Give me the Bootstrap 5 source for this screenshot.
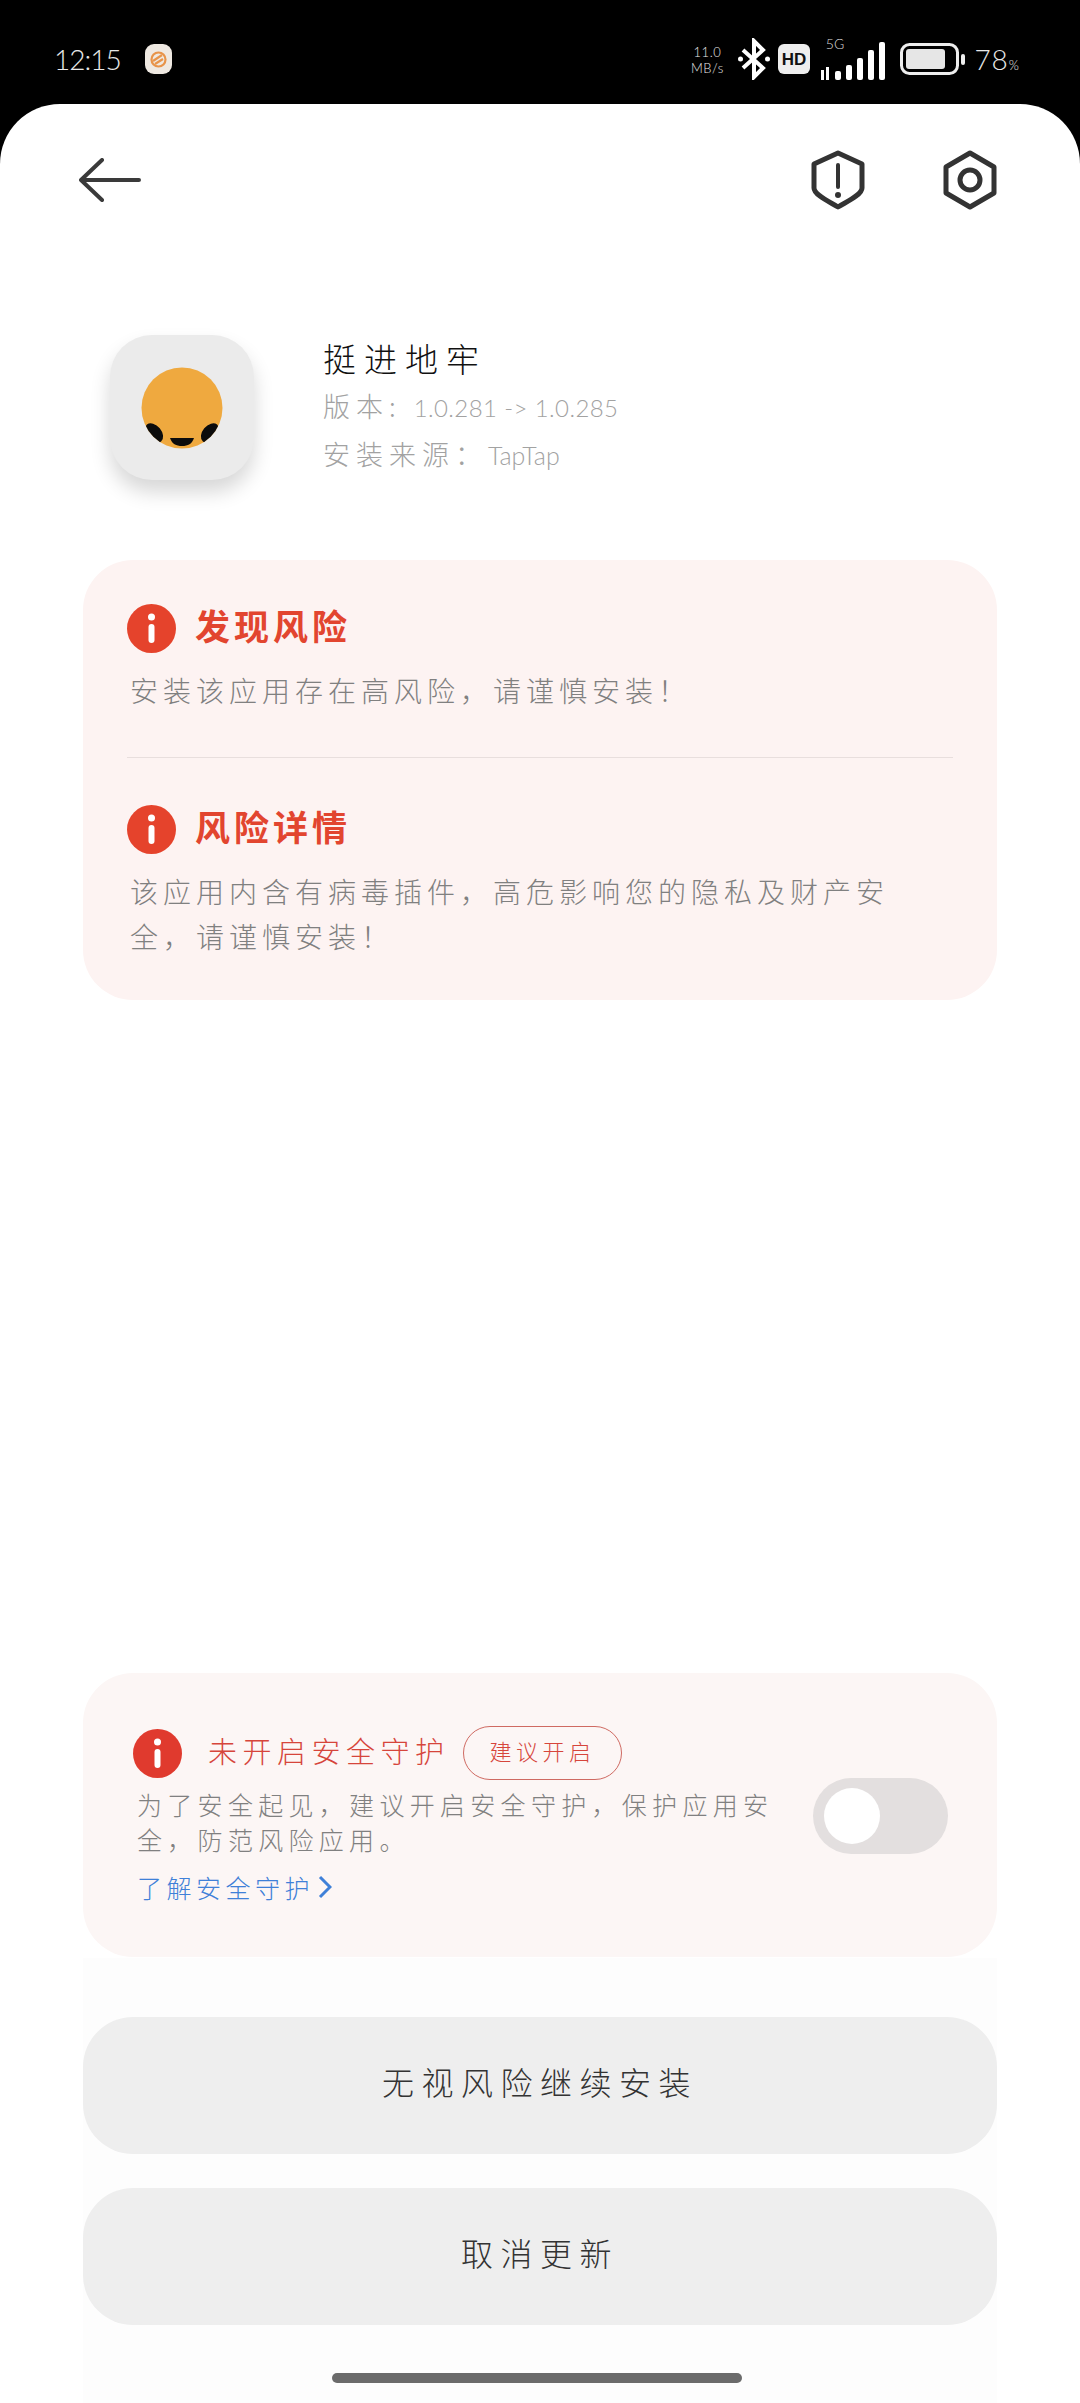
<!DOCTYPE html>
<html lang="zh-CN"><head><meta charset="utf-8">
<link href="https://cdn.jsdelivr.net/npm/bootstrap@5.3.0/dist/css/bootstrap.min.css" rel="stylesheet">
<style>
html,body{margin:0;width:1080px;height:2403px;overflow:hidden;background:#000;font-family:"Noto Sans CJK SC","Noto Sans",sans-serif;font-weight:300}
.stat{height:104px;padding-top:14px;color:#e8e8e8;font-family:"Lato","Noto Sans",sans-serif;font-weight:300}
.clock{font-size:28px;letter-spacing:-1px;margin-left:54px;width:91px;line-height:1}
.appdot{width:27px;height:30px;border-radius:9px;background:#efe9e2}
.speed{font-size:13px;line-height:16px;width:36px;text-align:center;letter-spacing:.5px;margin-right:13px;padding-top:2px}
.sigbars{margin-right:12px}
.pct{font-size:28px;margin-left:8px;margin-right:60px;line-height:1;letter-spacing:1px}
.pct small{font-size:13px}
.sheet{height:2299px;background:#fff;border-radius:60px 60px 0 0}
.topbar{height:60px;margin-top:46px;padding:0 83px 0 79px}
.approw{margin-top:125px;padding-left:110px;gap:69px}
.appicon{width:144px;height:145px;border-radius:42px;background:#ebebeb;box-shadow:0 12px 20px rgba(0,0,0,.16)}
.appname{font-size:33px;line-height:46px;color:#111;letter-spacing:8px;margin-bottom:2px}
.appsub{font-size:27px;line-height:46px;color:#a2a2a2;letter-spacing:6px}
.latin{font-size:24px;letter-spacing:.4px;font-family:"Lato","Noto Sans",sans-serif}
.latin2{font-size:25px;letter-spacing:0;font-family:"Lato","Noto Sans",sans-serif}
.panel{margin:80px 83px 0;padding:44px 44px 41px;background:#fdf3f2;border-radius:50px}
.ico{width:49px;height:49px;flex:none}
.head{font-size:35px;line-height:49px;font-weight:700;color:#e2452f;letter-spacing:4px;margin-left:19px;margin-top:-9px}
.txt{font-size:28px;line-height:45px;letter-spacing:5px;color:#808080;padding-left:3px;max-width:790px}
.rule{height:1px;background:#e8dedd;margin:44px 0 47px}
.txtgap{margin-top:15px}
.foot{margin:auto 83px 0;background:linear-gradient(#fff 0 285px,#fdfdfd 285px)}
.guard{height:284px;background:#fcf6f5;border-radius:50px;padding:53px 49px 52px 50px}
.guardtitle{font-size:29px;line-height:54px;letter-spacing:5.5px;color:#d6453b;margin-left:26px;width:255px;white-space:nowrap;margin-top:-6px}
.tag{width:159px;height:54px;border:1px solid #cf6a62;border-radius:27px;color:#d6453b;font-size:22px;letter-spacing:4.500px;line-height:46px;text-align:center}
.guardtxt{font-size:25px;line-height:35px;letter-spacing:5.3px;color:#808080;padding-left:4px;margin-top:7px;width:650px}
.guardlink{font-size:25px;line-height:36px;letter-spacing:4.5px;color:#3f80d8;margin-top:12px;padding-left:4px}
.tog{width:135px;height:76px;border-radius:38px;background:#e3dfdf;padding:10px 11px;flex:none}
.knob{width:56px;height:56px;border-radius:50%;background:#fff}
.bigbtn{height:137px;padding-bottom:16px;border:0;border-radius:50px;background:#eee;color:#333;font-size:32px;letter-spacing:7.5px;font-weight:300}
.bigbtn:hover{background:#eee;color:#333}
.firstbtn{margin-top:60px}
.nextbtn{margin-top:34px}
.homebar{width:410px;height:10px;background:#6b6b6b;border-radius:5px;margin:48px 0 20px 249px}
</style></head>
<body>
<div class="stat d-flex align-items-center">
  <div class="clock">12:15</div>
  <div class="appdot d-flex align-items-center justify-content-center">
    <svg width="19" height="19" viewBox="0 0 19 19" fill="none" stroke="#e8944a" stroke-width="2.2"><circle cx="9.500" cy="9.500" r="7"/><path d="M4 11l9-6M6 14l8-5"/></svg>
  </div>
  <div class="ms-auto speed">11.0<br>MB/s</div>
  <svg width="32" height="42" viewBox="0 0 32 42" fill="none" stroke="#fff" stroke-width="4" class="me-2"><path d="M5 12l20 18-9 9V3l9 9L5 30"/><circle cx="2.500" cy="21" r="2.500" fill="#fff" stroke="none"/><circle cx="29.500" cy="21" r="2.500" fill="#fff" stroke="none"/></svg>
  <svg width="32" height="30" viewBox="0 0 32 30" class="me-2"><rect width="32" height="30" rx="6" fill="#eee"/><text x="16" y="21" text-anchor="middle" font-family="Liberation Sans" font-weight="700" font-size="17" fill="#111">HD</text></svg>
  <svg width="70" height="46" viewBox="0 0 70 46" class="sigbars"><text x="17" y="13" text-anchor="middle" font-family="Lato" font-size="14" fill="#ddd">5G</text><g fill="#fff"><rect x="3" y="34" width="3" height="10"/><rect x="8" y="31" width="3" height="13"/><rect x="17" y="35" width="6" height="9" rx="2"/><rect x="28" y="29" width="6" height="15" rx="2"/><rect x="39" y="22" width="6" height="22" rx="2"/><rect x="50" y="14" width="6" height="30" rx="2"/><rect x="61" y="6" width="6" height="38" rx="2"/></g></svg>
  <svg width="66" height="32" viewBox="0 0 66 32"><rect x="1.500" y="1.500" width="56" height="29" rx="8" fill="none" stroke="#eee" stroke-width="3"/><rect x="6" y="6" width="39" height="20" rx="3" fill="#e6e6e6"/><rect x="61" y="11" width="4" height="11" rx="2" fill="#eee"/></svg>
  <div class="pct">78<small>%</small></div>
</div>
<div class="sheet d-flex flex-column">
  <div class="topbar d-flex align-items-center">
    <svg width="62" height="44" viewBox="0 0 62 44" fill="none" stroke="#3a3a3a" stroke-width="4" stroke-linecap="round" stroke-linejoin="round"><path d="M23 2L2 22l21 20M2 22h58"/></svg>
    <svg class="ms-auto" width="54" height="60" viewBox="0 0 54 60" fill="none" stroke="#333" stroke-width="5" stroke-linejoin="round"><path d="M27 3l24 11v24c0 7-16 14-24 19C19 52 3 45 3 38V14z"/><path d="M27 15v22" stroke-width="4" stroke-linecap="round"/><circle cx="27" cy="45" r="3" fill="#333" stroke="none"/></svg>
    <svg style="margin-left:78px" width="54" height="60" viewBox="0 0 54 60" fill="none" stroke="#333" stroke-width="5" stroke-linejoin="round"><path d="M27 3l24 14v26L27 57 3 43V17z"/><circle cx="27" cy="30" r="10"/></svg>
  </div>

  <div class="approw d-flex">
    <div class="appicon d-flex align-items-center justify-content-center flex-none">
      <svg width="82" height="82" viewBox="0 0 82 82"><defs><clipPath id="egg"><circle cx="41" cy="41" r="40.500"/></clipPath></defs><circle cx="41" cy="41" r="40.500" fill="#efa93f"/><g clip-path="url(#egg)"><ellipse cx="13" cy="66" rx="11" ry="7.500" transform="rotate(50 13 66)" fill="#0c0c0c"/><ellipse cx="69" cy="66" rx="11" ry="7.500" transform="rotate(-50 69 66)" fill="#0c0c0c"/><path d="M29 71h24c-2 6-6 8-12 8s-10-2-12-8z" fill="#0c0c0c"/></g></svg>
    </div>
    <div>
      <div class="appname">挺进地牢</div>
      <div class="appsub">版本: <span class="latin">1.0.281 -&gt; 1.0.285</span></div>
      <div class="appsub">安装来源：<span class="latin2">TapTap</span></div>
    </div>
  </div>

  <div class="panel">
    <div class="d-flex align-items-center">
      <svg class="ico" viewBox="0 0 49 49"><circle cx="24.500" cy="24.500" r="24.500" fill="#e5432c"/><circle cx="24.500" cy="13" r="3.500" fill="#fff"/><rect x="21.500" y="20" width="6" height="19" rx="3" fill="#fff"/></svg>
      <div class="head">发现风险</div>
    </div>
    <div class="txt txtgap">安装该应用存在高风险，请谨慎安装！</div>
    <div class="rule"></div>
    <div class="d-flex align-items-center">
      <svg class="ico" viewBox="0 0 49 49"><circle cx="24.500" cy="24.500" r="24.500" fill="#e5432c"/><circle cx="24.500" cy="13" r="3.500" fill="#fff"/><rect x="21.500" y="20" width="6" height="19" rx="3" fill="#fff"/></svg>
      <div class="head">风险详情</div>
    </div>
    <div class="txt txtgap">该应用内含有病毒插件，高危影响您的隐私及财产安全，请谨慎安装！</div>
  </div>

  <div class="foot">
    <div class="guard d-flex align-items-center justify-content-between">
      <div>
        <div class="d-flex align-items-center">
          <svg class="ico" viewBox="0 0 49 49"><circle cx="24.500" cy="24.500" r="24.500" fill="#e03a2e"/><circle cx="24.500" cy="13" r="3.500" fill="#fff"/><rect x="21.500" y="20" width="6" height="19" rx="3" fill="#fff"/></svg>
          <div class="guardtitle">未开启安全守护</div>
          <div class="tag">建议开启</div>
        </div>
        <div class="guardtxt">为了安全起见，建议开启安全守护，保护应用安全，防范风险应用。</div>
        <div class="guardlink d-flex align-items-center">了解安全守护<svg class="ms-1" width="14" height="24" viewBox="0 0 14 24" fill="none" stroke="#3f80d8" stroke-width="3"><path d="M2 2l10 10L2 22"/></svg></div>
      </div>
      <div class="tog"><div class="knob"></div></div>
    </div>
    <button type="button" class="btn bigbtn w-100 d-block firstbtn">无视风险继续安装</button>
    <button type="button" class="btn bigbtn w-100 d-block nextbtn">取消更新</button>
    <div class="homebar"></div>
  </div>
</div>
<script src="https://cdn.jsdelivr.net/npm/bootstrap@5.3.0/dist/js/bootstrap.bundle.min.js"></script>
</body></html>
